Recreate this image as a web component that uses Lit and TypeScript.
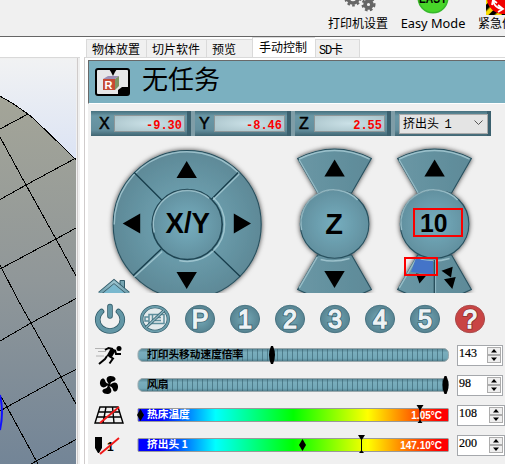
import { LitElement, html, svg, css } from "lit";
import { customElement, property } from "lit/decorators.js";

const CJK = css`"Noto Sans CJK SC", sans-serif`;

@customElement("bed-view")
class BedView extends LitElement {
  static styles = css`
    :host { display: block; }
    svg { display: block; }
    .grid { fill: none; stroke: #000; stroke-width: 1; shape-rendering: crispEdges; }
  `;
  render() {
    return html`<svg width="76" height="405" viewBox="0 59 76 405">
      <defs>
        <linearGradient id="sky" x1="0" y1="59" x2="0" y2="464" gradientUnits="userSpaceOnUse">
          <stop offset="0" stop-color="#f1f2f3" /><stop offset=".25" stop-color="#dbe3f4" /><stop offset="1" stop-color="#a8bfe8" />
        </linearGradient>
        <linearGradient id="bed" x1="0" y1="96" x2="0" y2="464" gradientUnits="userSpaceOnUse">
          <stop offset="0" stop-color="#a4a598" /><stop offset=".5" stop-color="#909799" /><stop offset="1" stop-color="#738597" />
        </linearGradient>
      </defs>
      <rect y="59" width="76" height="405" fill="url(#sky)" />
      <path d="M0 96L12 103L28 114L34 119L66 150L76 160V464H0Z" fill="url(#bed)" />
      <path class="grid" d="M-1 95.5L12 103L28 114L34 119L66 150L77 161M0 129L28 114M0 137L26 185L56 239L76 276M0 199.5L26 185L76 158M0 269L56 239L76 228M0 265L18 300L31 323L61 377L76 404M0 341L31 323L76 298.500M0 395L7 407L38 464M0 411L7 407L61 377L76 369.500M31 464L76 439.500" />
      <path d="M0 395Q4 412 0 430" fill="none" stroke="#1010ff" stroke-width="2" />
    </svg>`;
  }
}

@customElement("jog-pad")
class JogPad extends LitElement {
  static styles = css`
    :host { display: block; }
    svg { display: block; }
    .cap { font: bold 29px "Liberation Sans", Arial, sans-serif; }
    .small { font-size: 26px; }
    .edge { stroke: #28505e; stroke-width: 1.1; }
    .hi { fill: none; stroke: #b4d5de; stroke-width: 1.5; opacity: .7; }
    .lo { fill: none; stroke: #173d4b; stroke-width: 1.3; }
    .mark { fill: none; stroke: #fb0000; stroke-width: 2; shape-rendering: crispEdges; }
  `;
  column(cx: number) {
    const wedge = "M-37 -65.500Q0 -84.500 36.800 -65.500L17 -31H-17Z";
    return svg`<g transform="translate(${cx} 224)">
      <g filter="url(#glow)">
        <path class="edge" d=${wedge} fill="url(#wing)" />
        <path class="edge" d=${wedge} transform="scale(1 -1)" fill="url(#wing)" />
        <circle class="edge" r="34.300" fill="url(#hub)" />
      </g>
      <path class="hi" d="M-35.500 -65Q0 -82 35 -65M-35.500 -64L-16.500 -31" />
      <path class="hi" d="M-17.500 33L-35.500 64" />
      <path class="hi" d="M-33 6A33 33 0 0 1 23 -24M-14 35.500Q0 39 15 34.500" />
      <path d="M0 -64.500L10.200 -47.500H-10.200Z" />
    </g>`;
  }
  render() {
    return html`<svg width="417" height="153" viewBox="88 140 417 153">
      <defs>
        <radialGradient id="hub"><stop offset="0" stop-color="#76aebf" /><stop offset="1" stop-color="#62909f" /></radialGradient>
        <radialGradient id="disc"><stop offset=".45" stop-color="#6a9cab" /><stop offset="1" stop-color="#5e8997" /></radialGradient>
        <linearGradient id="wing" x1="0" x2="1"><stop offset="0" stop-color="#6997a5" /><stop offset="1" stop-color="#5e8a98" /></linearGradient>
        <filter id="glow" x="-20%" y="-20%" width="140%" height="140%">
          <feDropShadow dx="0" dy="0" stdDeviation="2.600" flood-color="#000" flood-opacity=".75" />
        </filter>
        <linearGradient id="roof" x1="0" x2="1"><stop offset="0" stop-color="#6d9dab" /><stop offset=".5" stop-color="#9dc4cf" /><stop offset="1" stop-color="#6d9dab" /></linearGradient>
      </defs>
      <g transform="translate(187.200 224.500)">
        <circle class="edge" r="74" fill="url(#disc)" filter="url(#glow)" />
        <path class="hi" d="M-73 0A73 73 0 0 1 52 -51" />
        <path class="hi" d="M25 -24L52 -50.500M-53 52.500L-25 27" />
        <path class="lo" d="M-53 -52L-25 -24M25 25L53 52M24 -25L51 -52M-54 51L-26 24.500" />
        <circle r="35" fill="url(#hub)" stroke="#1e4452" stroke-width="1.600" />
        <path class="hi" d="M-33 8A34 34 0 0 1 22 -26" />
        <path class="hi" d="M26 -27A37 37 0 0 1 26 26.500M26 26.500A37 37 0 0 1 -8 36" />
        <path d="M-.5 -63.500L9.700 -46.500H-10.700ZM-.5 64.500L9.700 47.500H-10.700ZM-64.500 -1L-47 -11V9ZM63.800 -1L46.600 -11V9Z" />
      </g>
      <text class="cap" x="165.500" y="233" textLength="44.500" lengthAdjust="spacingAndGlyphs">X/Y</text>
      ${this.column(334.6)}
      <path d="M334.500 288L344.700 271H324.300Z" />
      <text class="cap" x="325.300" y="234" textLength="17.700" lengthAdjust="spacingAndGlyphs">Z</text>
      ${this.column(434.6)}
      <path d="M416 258Q424 261.500 433 261V274.500L411 272Z" fill="#4474c8" />
      <path d="M434.300 260V293" stroke="#264c5a" stroke-width="1.300" />
      <path d="M435.600 260V293" stroke="#90b8c4" stroke-width="1" />
      <path d="M416 273.500L426.700 275L419.500 283.500ZM441.500 270.700L452.700 266.700L451 277.500ZM444 279.300L455.700 277L452.300 289Z" />
      <text class="cap small" x="420" y="232" textLength="27.500" lengthAdjust="spacingAndGlyphs">10</text>
      <rect class="mark" x="414" y="209" width="48" height="27" />
      <rect class="mark" x="405" y="258" width="32" height="17" />
      <path d="M120 285V280.500H124.500V291" fill="#76a5b2" stroke="#315b69" />
      <path d="M103 293L114 284L125 293Z" fill="#79b8ce" />
      <path d="M99.500 293.500L114 281.500L128.500 293.500" fill="none" stroke="#2f5967" stroke-width="4.200" />
      <path d="M99.500 293.500L114 281.500L128.500 293.500" fill="none" stroke="url(#roof)" stroke-width="2.500" />
    </svg>`;
  }
}

@customElement("round-key")
class RoundKey extends LitElement {
  @property() kind = "";
  static styles = css`
    :host { display: block; }
    svg { display: block; overflow: visible; }
    text { font: 25px "Liberation Sans", Arial, sans-serif; text-anchor: middle; fill: #eef3f5; stroke: #eef3f5; stroke-width: 1.300; }
    .rim { fill: none; stroke: #3c6674; stroke-width: 3; }
    .help { stroke: #8c2f2f; }
  `;
  glyph() {
    if (this.kind === "power")
      return svg`<path d="M-8.500 -7.500A12.300 11.300 0 1 0 8.500 -7.500M0 -12.500V-3" fill="none" stroke="#315b69" stroke-width="5.600" stroke-linecap="round" />
        <path d="M-8.500 -7.500A12.300 11.300 0 1 0 8.500 -7.500M0 -12.500V-3" fill="none" stroke="#6397a6" stroke-width="4" stroke-linecap="round" />`;
    if (this.kind === "motor")
      return svg`<ellipse rx="13.300" ry="12.300" fill="#e3eaec" stroke="#355f6d" stroke-width="3.300" />
        <ellipse rx="13.300" ry="12.300" fill="none" stroke="#6b9dab" stroke-width="2" />
        <path d="M-6 -4.500H9V4.500H-6ZM-6 -2H-10V2H-6M-2.500 -4.500V4.500M0 -1.500H6M0 1.500H6" fill="none" stroke="#5f8f9d" stroke-width="1.500" />
        <path d="M-9 8.500L9 -8.500" stroke="#315b69" stroke-width="3" /><path d="M-9 8.500L9 -8.500" stroke="#8cb7c3" stroke-width="1.500" />`;
    const help = this.kind === "?";
    return svg`<ellipse rx="14.600" ry="13.700" fill=${help ? "#c94444" : "url(#k)"} stroke=${help ? "#a94d4d" : "#4d7785"} />
      <text class=${help ? "rim help" : "rim"} y="9" aria-hidden="true">${this.kind}</text>
      <text y="9">${this.kind}</text>`;
  }
  render() {
    return html`<svg width="30" height="28" viewBox="-15 -14 30 28">
      <defs><radialGradient id="k"><stop offset="0" stop-color="#76aab8" /><stop offset="1" stop-color="#568391" /></radialGradient></defs>
      ${this.glyph()}</svg>`;
  }
}

@customElement("spin-box")
class SpinBox extends LitElement {
  @property() value = "";
  static styles = css`
    :host { display: flex; justify-content: space-between; box-sizing: border-box; height: 21px; border: 1px solid #a5a8ac; background: #fff; padding: 0 1px; }
    .num { font: 12px/15px "Liberation Serif", serif; -webkit-text-stroke: .2px #000; }
    .btns { display: flex; flex-direction: column; padding-top: 1px; }
    .b { box-sizing: border-box; width: 14px; height: 8px; border: 1px solid #acacac; background: #eee; }
    svg { display: block; margin: 0 auto; }
  `;
  render() {
    return html`<span class="num">${this.value}</span><span class="btns">
      <span class="b"><svg width="6" height="6" viewBox="0 0 6 6"><path d="M3 1L6 4.500H0Z" /></svg></span>
      <span class="b"><svg width="6" height="6" viewBox="0 0 6 6"><path d="M3 5L6 1.500H0Z" /></svg></span></span>`;
  }
}

const icons: Record<string, unknown> = {
  run: svg`<path d="M0 2.500H13M3 5.500H11M1 10H9" stroke="#999" stroke-width="1" opacity=".7"/><circle cx="24" cy="2.500" r="2.500"/>
    <path d="M10 4L13.500 2L18 3M20 4L21 8L26 8M12 10L10 13L4 18M14 10L18 12.500L14.500 17.500" fill="none" stroke="#000" stroke-width="2"/><path d="M16 2L21 4L17 11L11.500 10Z"/>`,
  fan: svg`<g transform="translate(14 9)"><circle r="1.800"/>${[0, 90, 180, 270].map(a => svg`<path transform=${`rotate(${a + 12})`} d="M0 -1C-3.500 -3 -5.500 -7 -1 -9C4 -10.500 7 -7 4 -5C2 -4 1 -3 1 -1Z"/>`)}</g>`,
  bed: svg`<path d="M5 1H23L28 17H0ZM3.500 6H24.500M2 11H26M11 1L8 17M17.500 1L19 17" fill="none" stroke="#000" stroke-width="1.400"/><path d="M5 17L24 1" stroke="#f01818" stroke-width="1.800"/>`,
  nozzle: svg`<path d="M0 1H7V12L4 17H3L0 12Z"/><text x="12" y="14.500" class="n">1</text><path d="M5 18L24 2" stroke="#f01818" stroke-width="1.800"/>`,
};

@customElement("slider-row")
class SliderRow extends LitElement {
  @property() icon = "";
  @property() label = "";
  @property() value = "";
  @property() temp = "";
  @property({ type: Number }) at = 0;
  @property({ type: Number }) target = -1;
  static styles = css`
    :host { display: flex; height: 30px; align-items: flex-start; padding-left: 7px; }
    svg { display: block; overflow: visible; }
    .icon { width: 42px; flex: none; }
    .n { font: bold 12px "Liberation Sans", sans-serif; }
    .track { width: 320px; flex: none; }
    .lab { font: bold 10.7px ${CJK}; }
    .hot { fill: #fff; }
    .t { font: bold 10px "Liberation Sans", sans-serif; fill: #fff; text-anchor: end; }
    spin-box { flex: none; width: 46px; }
    .wide { width: 48px; }
  `;
  render() {
    const hot = this.temp !== "";
    return html`<div class="icon"><svg width="30" height="20" viewBox="0 -1 30 20">${icons[this.icon]}</svg></div>
      <div class="track"><svg width="312" height="22" viewBox="0 0 312 22">
        <defs>
          <linearGradient id="h"><stop offset="0" stop-color="#00f" /><stop offset=".07" stop-color="#00f" /><stop offset=".25" stop-color="#0ff" /><stop offset=".5" stop-color="#0f0" /><stop offset=".74" stop-color="#ff0" /><stop offset=".97" stop-color="#f00" /></linearGradient>
          <linearGradient id="g" x2="0" y2="1"><stop offset="0" stop-color="#52808f" /><stop offset=".3" stop-color="#79adbc" /><stop offset=".75" stop-color="#71a7b7" /><stop offset="1" stop-color="#4e7b89" /></linearGradient>
          <pattern id="s" width="5" height="13" patternUnits="userSpaceOnUse"><path d="M.5 0V13" stroke="#355e6c" stroke-width="1" opacity=".6" /></pattern>
        </defs>
        ${hot
          ? svg`<rect x="1" y="3.500" width="310.500" height="13" rx="1" fill="url(#h)" stroke="#999" stroke-width="1" />`
          : svg`<rect x="1" y="3.500" width="310.500" height="13" rx="5" fill="url(#g)" stroke="#9ba9ad" /><rect x="8" y="4" width="298" height="12" fill="url(#s)" />`}
        ${hot
          ? svg`<path d=${`M${this.at} 4L${this.at + 3.5} 10L${this.at} 16L${this.at - 3.5} 10Z`} />`
          : svg`<path d=${`M${this.at - 1} 1H${this.at + 1}Q${this.at + 5} 10 ${this.at + 1} 19H${this.at - 1}Q${this.at - 5} 10 ${this.at - 1} 1Z`} />`}
        ${this.target < 0 ? "" : svg`<path d=${`M${this.target - 3.5} 0H${this.target + 3.5}L${this.target} 5.500ZM${this.target - 2.5} 18L${this.target} 15L${this.target + 2.5} 18Z`} /><path d=${`M${this.target} 4V16`} stroke="#000" />`}
        <text class="lab ${hot ? "hot" : ""}" x="10" y="12.500">${this.label}</text>
        <text class="t" x="305" y="13.500">${this.temp}</text>
      </svg></div>
      <spin-box class=${hot ? "wide" : ""} value=${this.value}></spin-box>`;
  }
}

@customElement("app-root")
class AppRoot extends LitElement {
  static styles = css`
    :host { display: flex; flex-direction: column; width: 505px; height: 464px; overflow: hidden; background: #fff; font: 12px ${CJK}; color: #000; }
    svg { display: block; }
    .toolbar { display: flex; gap: 13px; box-sizing: border-box; height: 37px; flex: none; padding-left: 328px; background: #f0f0f0; border-bottom: 1px solid #666; }
    .tool { display: flex; flex-direction: column; align-items: center; flex: none; white-space: nowrap; line-height: 16px; }
    .tool span { margin-top: -1px; }
    .easy { font: 12.8px/17px "Noto Sans", sans-serif; width: 64px; }
    .et { font: bold 12px "Liberation Sans", sans-serif; text-anchor: middle; }
    .main { display: flex; flex: 1; min-height: 0; }
    .left { flex: none; width: 80px; box-sizing: border-box; margin-top: 20px; border-top: 1px solid #d9d9d9; padding-top: 1px; background: linear-gradient(90deg, #f0f0f0 77px, #cfcbcb 77px 78px, #f0f0f0 78px); }
    .right { flex: 1; min-width: 0; padding-left: 4px; display: flex; flex-direction: column; }
    .tabs { display: flex; align-items: flex-end; height: 20px; padding-left: 2px; flex: none; }
    .tab { box-sizing: border-box; height: 18px; border: 1px solid #dadada; border-bottom: 0; border-right: 0; background: #f0f0f0; padding: 0 0 0 5px; line-height: 17px; white-space: nowrap; }
    .tab.w4 { width: 60px; } .tab.w2 { width: 46px; }
    .tab.on { height: 20px; width: 63px; background: #fff; padding-left: 6px; }
    .tab.sd { width: 45px; padding-left: 3px; border-right: 1px solid #dadada; }
    .mono { font-family: "Liberation Mono", monospace; letter-spacing: -1.200px; }
    .pane { flex: 1; border-left: 1px solid #d0cccc; border-top: 1px solid #d9d9d9; padding: 2px 0 0 3px; }
    .body { height: 404px; background: #f0f0f0; }
    .job { display: flex; align-items: center; box-sizing: border-box; height: 44px; background: #7bb0c0; border-top: 1px solid #696969; border-left: 1px solid #696969; padding-left: 6px; gap: 12px; font-size: 26px; line-height: 40px; border-bottom: 1px solid #fff; }
    .job span { margin-top: -8px; }
    .axes { display: flex; margin: 7px 0 0 3px; width: 400px; height: 25px; }
    .axis { display: flex; align-items: center; box-sizing: border-box; width: 100px; padding-left: 4px; border-left: 4px solid #7f9da7; border-right: 4px solid #3b606e; background: linear-gradient(#47717f, #6b98a6 20%, #648f9e 75%, #406572); }
    .axis:first-child { border-left: 0; padding-left: 8px; }
    .axis b { font: 16px "Liberation Sans", Arial, sans-serif; -webkit-text-stroke: .5px #000; width: 15px; flex: none; }
    .val { box-sizing: border-box; width: 71px; height: 17px; border: 1px solid #8e9799; background: radial-gradient(#cbe1e7, #a8c2c9); text-align: right; padding-right: 2px; font: bold 12px/20px "Liberation Mono", monospace; color: #fa0000; }
    .axis.pick { padding: 0 0 0 4px; }
    .combo { display: flex; justify-content: space-between; align-items: center; box-sizing: border-box; width: 89px; height: 20px; flex: none; border: 1px solid #a9a9a9; background: #e4e4e4; padding: 0 4px 1px 3px; white-space: nowrap; }
    .keys { display: flex; gap: 15px; padding: 12px 0 0 7px; height: 40px; box-sizing: border-box; }
    jog-pad { margin-top: 4px; }
    .rows { padding-top: 12px; }
  `;
  render() {
    const gear = (x: number, y: number, r: number) => svg`<g transform="translate(${x} ${y})">
      <circle r=${r} fill="none" stroke="#666" stroke-width="3.600" /><circle r=${r + 2.4} fill="none" stroke="#666" stroke-width="2.400" stroke-dasharray="2.600 2.300" /></g>`;
    return html`
      <div class="toolbar">
        <div class="tool"><svg width="60" height="16">${gear(25, -2, 5)}${gear(40.5, 4.5, 3.4)}</svg><span>打印机设置</span></div>
        <div class="tool easy"><svg width="64" height="16">
          <circle cx="32" cy="-2" r="15.500" fill="#37b82c" /><circle cx="32" cy="-2" r="14" fill="#48d529" /><text class="et" x="32" y="3" textLength="28" lengthAdjust="spacingAndGlyphs">EASY</text></svg><span>Easy Mode</span></div>
        <div class="tool"><svg width="48" height="16">
          <defs><pattern id="z" width="9" height="9" patternUnits="userSpaceOnUse" patternTransform="rotate(45)"><rect width="9" height="9" fill="#f8dc00" /><rect width="4.500" height="9" fill="#000" /></pattern></defs>
          <rect x="8" width="34" height="15" fill="url(#z)" /><circle cx="25" cy="-2" r="16" fill="#f00000" />
          <path d="M15 1Q17 8 24 9M20 5L25 9L20 12M14 5L15 0L19 3" fill="none" stroke="#fff" stroke-width="1.800" /></svg><span>紧急停止</span></div>
      </div>
      <div class="main">
        <div class="left"><bed-view></bed-view></div>
        <div class="right">
          <div class="tabs">
            <div class="tab w4">物体放置</div><div class="tab w4">切片软件</div><div class="tab w2">预览</div>
            <div class="tab on">手动控制</div><div class="tab sd"><span class="mono">SD</span>卡</div>
          </div>
          <div class="pane"><div class="body">
            <div class="job">
              <svg width="35" height="28" viewBox="0 0 35 28">
                <rect width="35" height="28" rx="3" /><rect x="2" y="2" width="31" height="24" rx="1" fill="#e6e7e8" />
                <path d="M14 1H22L20 4L18 8L16 4Z" /><path d="M23 26V22L27 19H34V27H23Z" />
                <path d="M8 11L13 8H24L20 11Z" fill="#9c8fb5" /><path d="M20 11L24 8V18L20 22Z" fill="#7d9464" /><rect x="8" y="11" width="12" height="11" fill="#c64a34" />
                <text x="9.500" y="20.500" fill="#fff" style="font:bold 11px 'Liberation Sans'">R</text>
              </svg>
              <span>无任务</span>
            </div>
            <div class="axes">
              <div class="axis"><b>X</b><div class="val">-9.30</div></div>
              <div class="axis"><b>Y</b><div class="val">-8.46</div></div>
              <div class="axis"><b>Z</b><div class="val">2.55</div></div>
              <div class="axis pick"><div class="combo"><span>挤出头&nbsp; <span class="mono">1</span></span>
                <svg width="9" height="6" viewBox="0 0 9 6"><path d="M.5 .5L4.500 4.500L8.500 .5" fill="none" stroke="#555" /></svg></div></div>
            </div>
            <jog-pad></jog-pad>
            <div class="keys">${["power", "motor", "P", "1", "2", "3", "4", "5", "?"].map(k => html`<round-key kind=${k}></round-key>`)}</div>
            <div class="rows">
              <slider-row icon="run" label="打印头移动速度倍率" value="143" at="135"></slider-row>
              <slider-row icon="fan" label="风扇" value="98" at="308.500"></slider-row>
              <slider-row icon="bed" label="热床温度" value="108" at="3.500" target="283" temp="1.05°C"></slider-row>
              <slider-row icon="nozzle" label="挤出头 1" value="200" at="165.500" target="224.500" temp="147.10°C"></slider-row>
            </div>
          </div></div>
        </div>
      </div>`;
  }
}
